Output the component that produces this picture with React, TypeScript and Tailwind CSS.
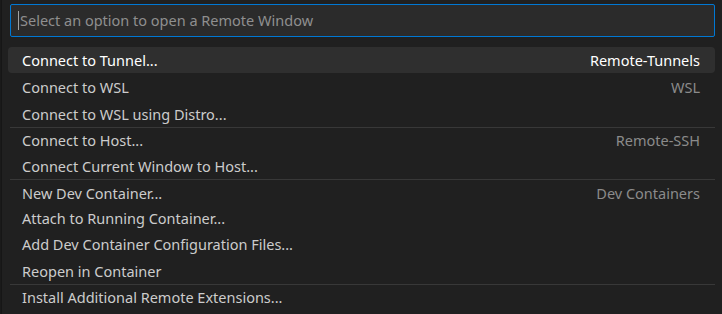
import React from 'react';

type Item = { label: string; detail?: string; separator?: boolean; focused?: boolean };

const ITEMS: Item[] = [
  { label: 'Connect to Tunnel...', detail: 'Remote-Tunnels', focused: true },
  { label: 'Connect to WSL', detail: 'WSL' },
  { label: 'Connect to WSL using Distro...' },
  { label: 'Connect to Host...', detail: 'Remote-SSH', separator: true },
  { label: 'Connect Current Window to Host...' },
  { label: 'New Dev Container...', detail: 'Dev Containers', separator: true },
  { label: 'Attach to Running Container...' },
  { label: 'Add Dev Container Configuration Files...' },
  { label: 'Reopen in Container' },
  { label: 'Install Additional Remote Extensions...', separator: true },
];

export default function App() {
  return (
    <div
      className="w-[722px] h-[314px] bg-[#202020] overflow-hidden flex"
      style={{ fontFamily: '"Noto Sans", "Open Sans", sans-serif' }}
    >
      {/* editor edge peeking out on the left */}
      <div className="w-[2px] h-full bg-[#1a1a1a] border-r border-[#161616]" />

      <div className="flex-1 flex flex-col pl-[6px] pr-[7px] pt-[4px]">
        {/* search input */}
        <div className="ml-[2px] h-[33px] rounded-[2px] border border-[#0078d4] bg-[#2b2b2b] flex items-center pl-[7px]">
          <span className="w-[1px] h-[19px] bg-[#a0a0a0] mr-[1px]" />
          <span className="text-[14.5px] text-[#8f8f8f] leading-none">Select an option to open a Remote Window</span>
        </div>

        {/* options list */}
        <div className="mt-[10px] flex flex-col">
          {ITEMS.map((item, i) => (
            <div
              key={i}
              className={
                (item.focused ? 'h-[26px] mb-[1.5px] rounded-[4px] bg-[#2f2f2f] text-white ' : 'h-[26.2px] ml-[2px] ') +
                (item.separator ? 'border-t border-[#383838] ' : '') +
                'flex items-center justify-between text-[14.5px] leading-none ' +
                (item.focused ? 'pl-[14px] pr-[15px]' : 'pl-[12px] pr-[15px] text-[#cccccc]')
              }
            >
              <span>{item.label}</span>
              {item.detail && (
                <span className={item.focused ? 'text-white' : 'text-[#8b8b8b]'}>{item.detail}</span>
              )}
            </div>
          ))}
        </div>
      </div>
    </div>
  );
}
